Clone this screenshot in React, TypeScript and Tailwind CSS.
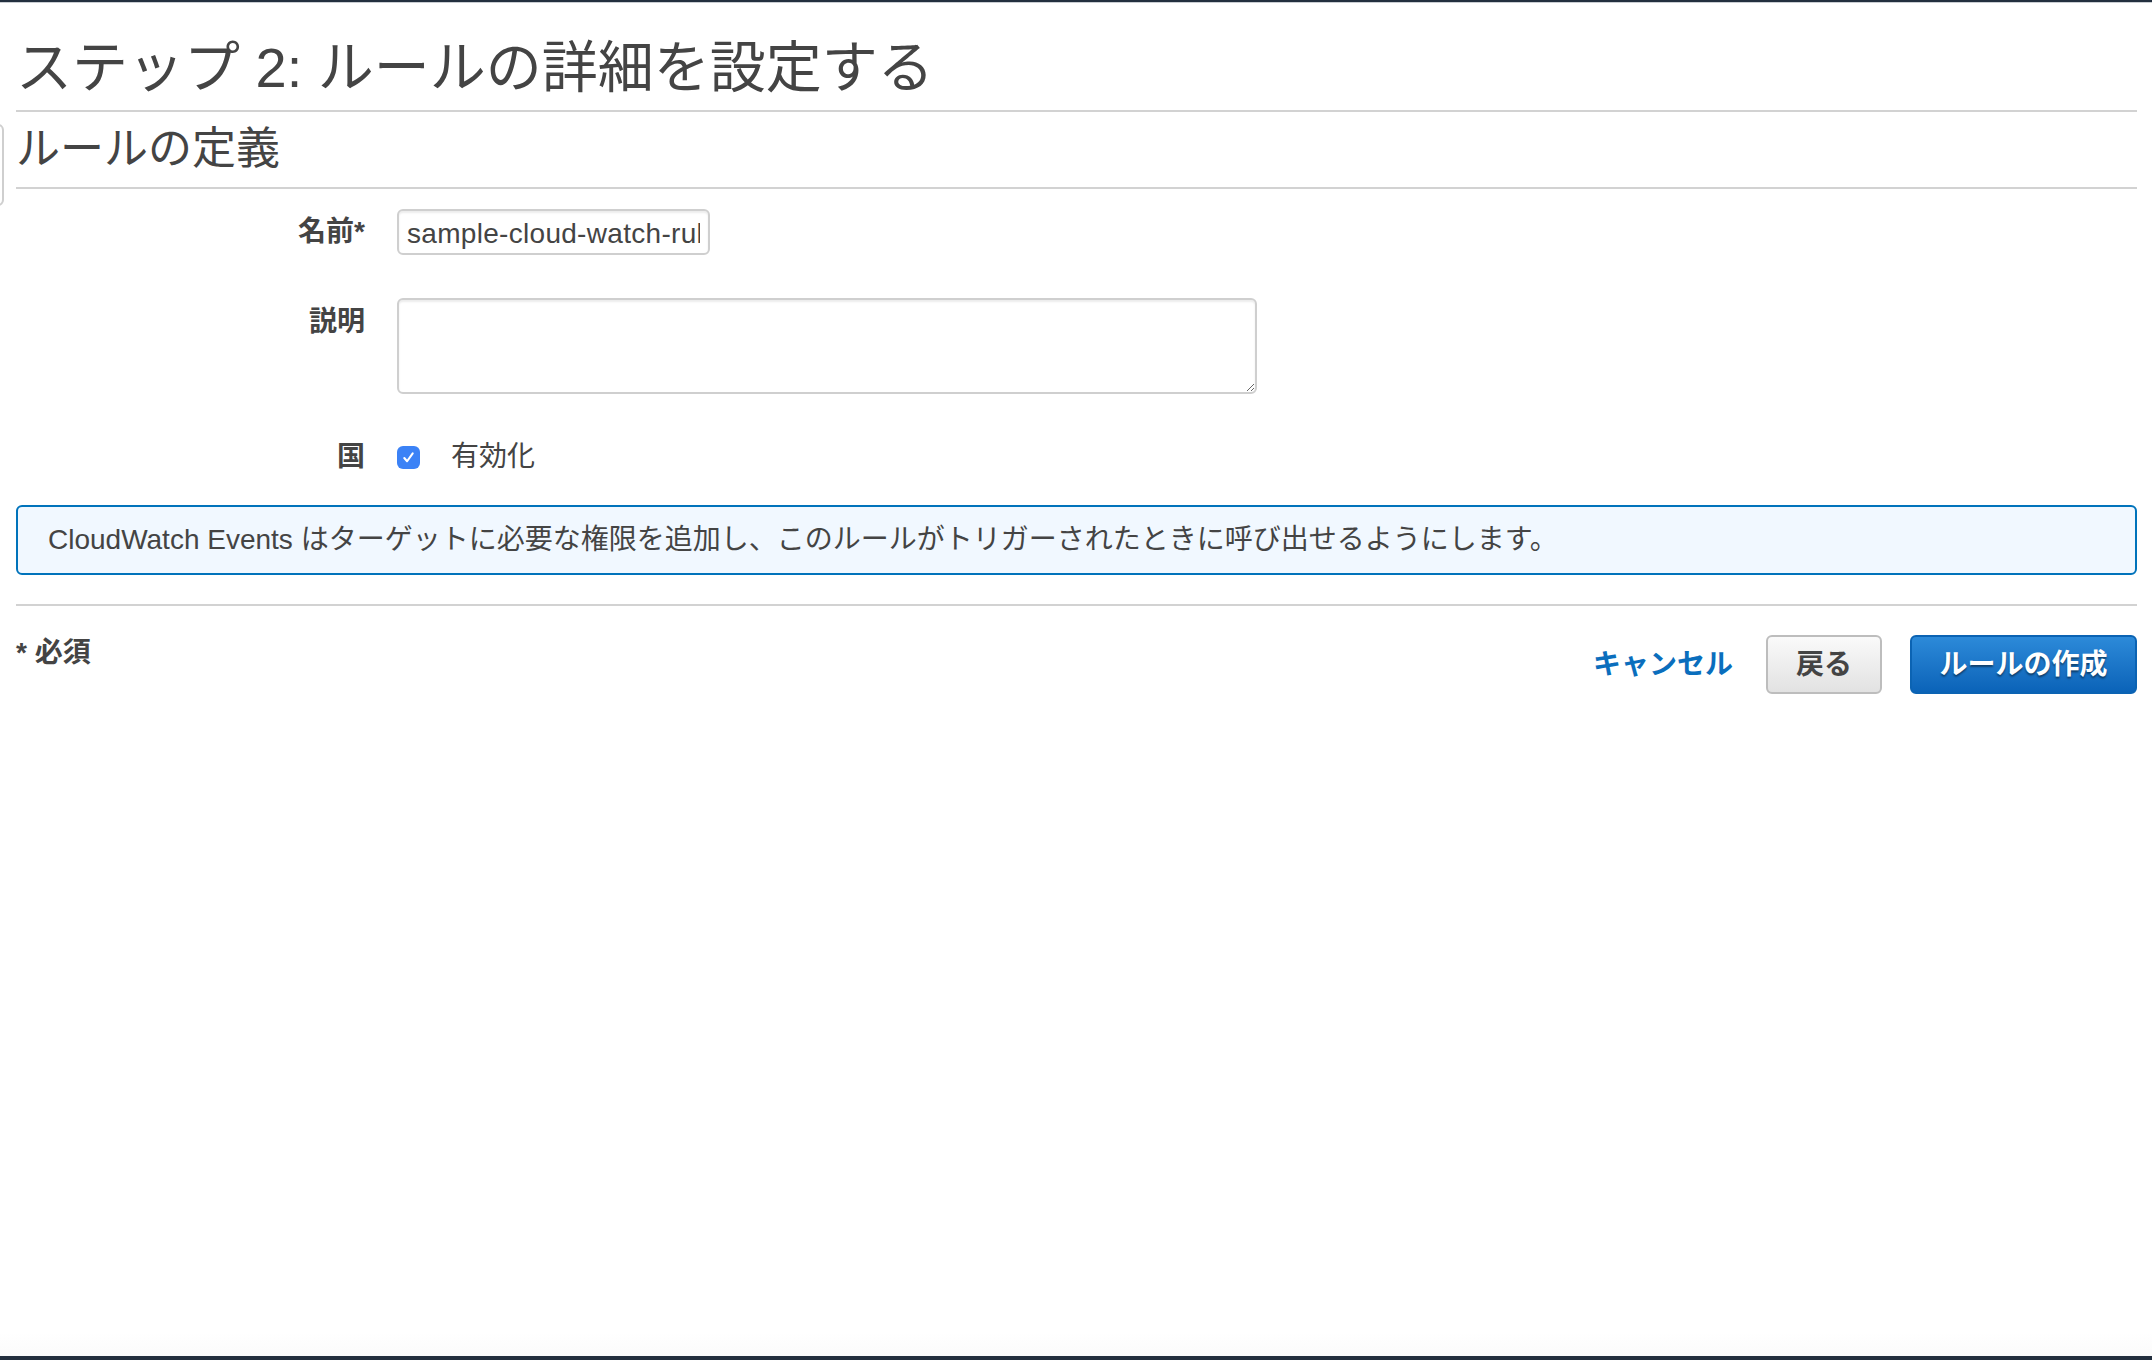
import React from 'react';

const FONT = {fontFamily: '"Liberation Sans", "Noto Sans CJK JP", sans-serif'};

function FieldRow({label, children, className, labelClass}: {label: string; children: React.ReactNode; className?: string; labelClass?: string}) {
  return (
    <div className={`flex gap-[32px] ${className ?? ''}`}>
      <div className={`w-[349px] shrink-0 text-right text-[28px] font-bold text-[#444] ${labelClass ?? ''}`}>{label}</div>
      <div className="flex-1">{children}</div>
    </div>
  );
}

export default function App() {
  return (
    <div style={FONT} className="relative flex h-[1360px] flex-col bg-white text-[#444]">
      {/* top console bar */}
      <div className="h-[2px] bg-[#232f3e]" />
      <div className="h-[1px] bg-[#c9cdd2]" />

      {/* side panel edge */}
      <div className="absolute left-[-12px] top-[124px] h-[82px] w-[16px] rounded-md border-2 border-[#cfcfcf]" />

      <main className="pl-[16px] pr-[15px]">
        <h1 className="pb-[7px] pt-[30px] text-[56px] font-normal leading-[70px] text-[#444]">
          ステップ 2: ルールの詳細を設定する
        </h1>
        <div className="h-[2px] bg-[#d2d2d2]" />
        <h2 className="pb-[10px] pt-[9px] text-[44px] font-normal leading-[56px] text-[#444]">ルールの定義</h2>
        <div className="h-[2px] bg-[#d2d2d2]" />

        <FieldRow label="名前*" className="mt-[20px] items-center">
          <input
            readOnly
            value="sample-cloud-watch-rule"
            className="h-[46px] w-[313px] rounded-[6px] border-2 border-[#cfcfcf] px-[8px] pt-[4px] text-[28px] tracking-[0.3px] text-[#444] shadow-[inset_0_2px_2px_rgba(0,0,0,0.08)] outline-none"
          />
        </FieldRow>

        <FieldRow label="説明" className="mt-[43px] items-start" labelClass="pt-[3px]">
          <textarea
            readOnly
            className="block h-[96px] w-[860px] rounded-[6px] border-2 border-[#cfcfcf] px-[8px] text-[28px] shadow-[inset_0_2px_2px_rgba(0,0,0,0.08)] outline-none"
          />
        </FieldRow>

        <FieldRow label="国" className="mt-[46px] items-center leading-[34px]">
          <label className="flex items-center gap-[31px] text-[28px] text-[#444]">
            <span className="flex h-[23px] w-[23px] items-center justify-center rounded-[6px] bg-[#3b82f6]">
              <svg width="15" height="15" viewBox="0 0 16 16" fill="none">
                <path d="M3.5 8.5l3 3.5 6-8.5" stroke="white" strokeWidth="2.2" strokeLinecap="round" strokeLinejoin="round" />
              </svg>
            </span>
            有効化
          </label>
        </FieldRow>

        <div className="mt-[31px] flex h-[70px] items-center rounded-[6px] border-2 border-[#0073bb] bg-[#f1f8ff] pl-[30px] text-[28px] text-[#444]">
          CloudWatch Events はターゲットに必要な権限を追加し、このルールがトリガーされたときに呼び出せるようにします。
        </div>

        <div className="mt-[29px] h-[2px] bg-[#d2d2d2]" />

        <div className="mt-[29px] flex items-start justify-between">
          <p className="text-[28px] font-bold leading-[36px] text-[#444]">* 必須</p>
          <div className="flex items-center">
            <a href="#" className="text-[28px] font-bold text-[#0a6ebd]">
              キャンセル
            </a>
            <button className="ml-[33px] h-[59px] w-[116px] rounded-[6px] border-2 border-[#bdbdbd] bg-gradient-to-b from-[#fafafa] to-[#e2e2e2] text-[28px] font-bold text-[#444]">
              戻る
            </button>
            <button className="ml-[28px] h-[59px] w-[227px] rounded-[6px] border-2 border-[#0b63b3] bg-gradient-to-b from-[#2c8ad9] to-[#0a63b8] text-[28px] font-bold text-white [text-shadow:0_2px_2px_rgba(0,0,0,0.45)]">
              ルールの作成
            </button>
          </div>
        </div>
      </main>

      <div className="flex-1" />
      <div className="h-[24px] bg-gradient-to-b from-white to-[#fbfbfb]" />
      <div className="h-[4px] bg-[#232f3e]" />
    </div>
  );
}
